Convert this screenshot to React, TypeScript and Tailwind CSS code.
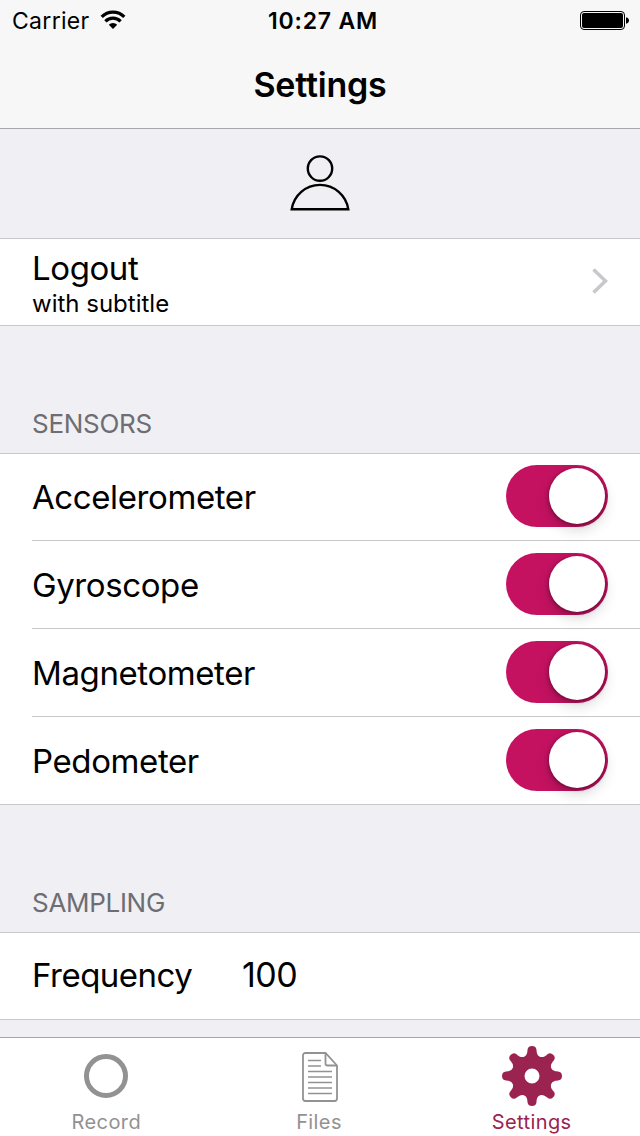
import React, { useState } from 'react';

const SENSORS = ['Accelerometer', 'Gyroscope', 'Magnetometer', 'Pedometer'];
const TOOTH_ANGLES = [0, 45, 90, 135, 180, 225, 270, 315];

const WifiIcon: React.FC = () => (
  <svg width="26" height="20" viewBox="0 0 26 20" fill="none" stroke="#000" strokeWidth="3.2">
    <path d="M1.7 6.8a15.8 15.8 0 0 1 22.6 0" />
    <path d="M5.4 11.3a10.7 10.7 0 0 1 15.2 0" />
    <path d="M13 19l-4.2-4.2a5.8 5.8 0 0 1 8.4 0z" fill="#000" stroke="none" />
  </svg>
);

const BatteryIcon: React.FC = () => (
  <svg width="49" height="19" viewBox="0 0 49 19">
    <rect x="0.5" y="0.5" width="44" height="18" rx="3.5" fill="none" stroke="#000" />
    <rect x="2" y="2" width="41" height="15" rx="2" fill="#000" />
    <path d="M46 6.2c2 .5 3 1.7 3 3.3s-1 2.8-3 3.3z" fill="#000" />
  </svg>
);

const PersonIcon: React.FC = () => (
  <svg width="60" height="56" viewBox="0 0 60 56" fill="none" stroke="#000" strokeWidth="2.4">
    <circle cx="30" cy="13.6" r="12.2" />
    <path d="M1.7 54.3A28.6 28.6 0 0 1 58.3 54.3z" />
  </svg>
);

const FileIcon: React.FC = () => (
  <svg width="36" height="50" viewBox="0 0 36 50" fill="none" stroke="currentColor" strokeWidth="1.8">
    <path d="M3.5 1h20L35 13.5V46.5a2.5 2.5 0 0 1-2.5 2.5h-29A2.5 2.5 0 0 1 1 46.5v-43A2.5 2.5 0 0 1 3.5 1z" />
    <path d="M23.5 1v10.5a2 2 0 0 0 2 2H35" />
    <path d="M6 8.5h13M6 14h13M6 19.5h24M6 25h24M6 30.5h24M6 36h24M6 41.5h24" strokeWidth="1.6" />
  </svg>
);

const GearIcon: React.FC = () => (
  <svg width="60" height="60" viewBox="-30 -30 60 60" fill="currentColor">
    {TOOTH_ANGLES.map((angle) => (
      <path
        key={angle}
        transform={`rotate(${angle})`}
        d="M-10 -18C-5.5 -20 -4.8 -22 -4.5 -26Q-4.2 -30 0 -30T4.5 -26C4.8 -22 5.5 -20 10 -18z"
      />
    ))}
    <circle r="14" fill="none" stroke="currentColor" strokeWidth="13" />
  </svg>
);

const Toggle: React.FC = () => {
  const [on, setOn] = useState(true);
  return (
    <button
      onClick={() => setOn(!on)}
      className={`mb-0.5 flex h-[62px] w-[102px] items-center rounded-full px-[3px] ${on ? 'justify-end bg-[#c41261]' : 'justify-start bg-gray-200'}`}
    >
      <span className="size-14 rounded-full bg-white shadow-[0_6px_14px_rgba(0,0,0,0.16),0_1px_4px_rgba(0,0,0,0.45)]" />
    </button>
  );
};

const SectionTitle: React.FC<{ title: string }> = ({ title }) => (
  <h2 className="flex h-[127px] items-end px-8 pb-[13px] text-[26px] leading-8 tracking-[-0.3px] text-[#6d6d72]">
    {title}
  </h2>
);

const App: React.FC = () => {
  return (
    <div className="flex h-[1136px] w-[640px] flex-col overflow-hidden bg-[#efeff4] font-['Inter','Liberation_Sans',sans-serif] text-black">
      {/* Status bar + title */}
      <header className="h-[129px] shrink-0 border-b border-[#a7a7ab] bg-[#f7f7f7]">
        <div className="grid h-10 grid-cols-3 items-center pl-3 pr-[11px] text-[23px]">
          <div className="flex items-center gap-2.5">
            <span className="pt-0.5 tracking-[0.3px]">Carrier</span>
            <WifiIcon />
          </div>
          <span className="pl-[5px] pt-0.5 text-center font-semibold tracking-[0.8px]">10:27 AM</span>
          <div className="flex justify-end">
            <BatteryIcon />
          </div>
        </div>
        <h1 className="flex h-[88px] items-center justify-center text-[34px] font-semibold tracking-[-0.2px]">Settings</h1>
      </header>

      <main className="min-h-0 flex-1 overflow-hidden">
        <div className="flex h-[109px] items-center justify-center pb-0.5">
          <PersonIcon />
        </div>

        <div className="flex h-[88px] items-center justify-between border-y border-[#c8c7cc] bg-white px-8">
          <div className="pt-[3px]">
            <div className="pb-0.5 text-[33px] leading-[38px] tracking-[-0.4px]">Logout</div>
            <div className="text-2xl leading-[30px]">with subtitle</div>
          </div>
          <svg className="mb-0.5" width="16" height="26" viewBox="0 0 16 26" fill="none" stroke="#c7c7cc" strokeWidth="3.5">
            <path d="M1.5 1.5L13.5 13L1.5 24.5" />
          </svg>
        </div>

        <SectionTitle title="SENSORS" />
        <div className="border-y border-[#c8c7cc] bg-white pl-8">
          {SENSORS.map((name, i) => (
            <div
              key={name}
              className={`flex items-center justify-between pr-8 ${i === 0 ? 'h-[86px]' : 'h-[88px] border-t border-[#c8c7cc]'}`}
            >
              <span className="pt-0.5 text-[33px] tracking-[-0.4px]">{name}</span>
              <Toggle />
            </div>
          ))}
        </div>

        <SectionTitle title="SAMPLING" />
        <div className="flex h-[88px] items-center border-y border-[#c8c7cc] bg-white px-8 tracking-[-0.5px]">
          <span className="w-[210px] text-[33px]">Frequency</span>
          <span className="pb-[3px] text-[34px]">100</span>
        </div>
      </main>

      {/* Tab bar */}
      <nav className="grid h-[99px] shrink-0 grid-cols-3 border-t border-[#a7a7ab] bg-white pr-0.5 text-xl tracking-[0.4px] text-[#929292]">
        <button className="flex flex-col items-center">
          <span className="flex h-[76px] items-center">
            <span className="size-11 rounded-full border-[5px] border-[#929292]" />
          </span>
          <span className="leading-4">Record</span>
        </button>
        <button className="flex flex-col items-center">
          <span className="flex h-[76px] items-center pl-0.5 pt-0.5">
            <FileIcon />
          </span>
          <span className="leading-4">Files</span>
        </button>
        <button className="flex flex-col items-center text-[#9b2350]">
          <span className="flex h-[76px] items-center">
            <GearIcon />
          </span>
          <span className="leading-4">Settings</span>
        </button>
      </nav>
    </div>
  );
};

export default App;
